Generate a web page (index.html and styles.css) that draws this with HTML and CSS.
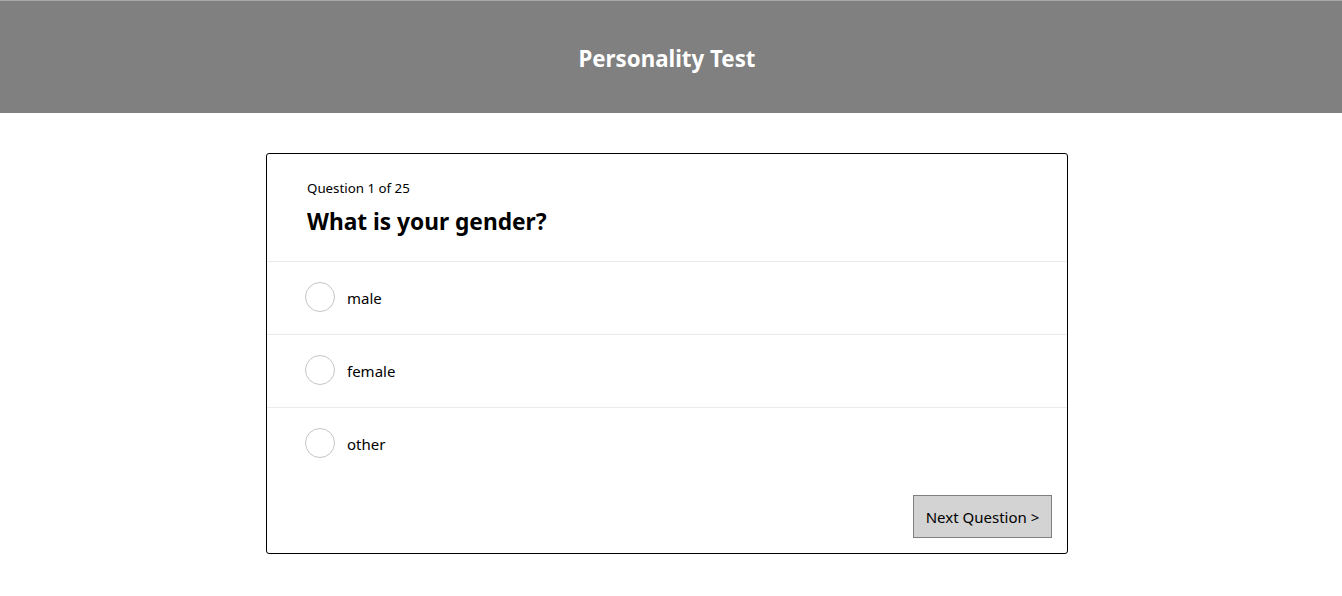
FILE: index.html
```html
<!DOCTYPE html>
<html>
<head>
<meta charset="utf-8">
<link rel="stylesheet" href="styles.css">
<title>Personality Test</title>
</head>
<body>
<header class="topbar">
  <h1 class="topbar-title">Personality Test</h1>
</header>
<main class="page">
  <section class="card">
    <div class="card-head">
      <div class="counter">Question 1 of 25</div>
      <h2 class="question">What is your gender?</h2>
    </div>
    <ul class="options">
      <li class="option"><span class="radio"></span><span class="label">male</span></li>
      <li class="option"><span class="radio"></span><span class="label">female</span></li>
      <li class="option"><span class="radio"></span><span class="label">other</span></li>
    </ul>
    <div class="actions">
      <button class="next-btn">Next Question &gt;</button>
    </div>
  </section>
</main>
</body>
</html>
```
FILE: styles.css
```css
html, body {
  margin: 0;
  padding: 0;
  background: #fff;
  font-family: "Noto Sans", "Open Sans", sans-serif;
  color: #000;
}
.topbar {
  border-top: 1px solid #a9a9a9;
  background: #808080;
  height: 112px;
  box-sizing: border-box;
  height: 113px;
  padding: 2px 8px 0 0;
  display: flex;
  align-items: center;
  justify-content: center;
}
.topbar-title {
  margin: 0;
  color: #fff;
  font-size: 22.3px;
  font-weight: 700;
}
.page {
  display: flex;
  justify-content: center;
  padding: 40px 8px 0 0;
}
.card {
  width: 800px;
  height: 399px;
  border: 1px solid #000;
  border-radius: 3px;
  display: flex;
  flex-direction: column;
}
.card-head {
  padding: 25px 40px 0 40px;
  height: 82px;
  border-bottom: 1px solid #ebebeb;
}
.counter {
  font-size: 13.3px;
  line-height: 18px;
}
.question {
  margin: 10px 0 0 0;
  font-size: 22.7px;
  font-weight: 700;
  line-height: 30px;
}
.options {
  list-style: none;
  margin: 0;
  padding: 0;
}
.option {
  display: flex;
  align-items: center;
  height: 72px;
  padding-left: 38px;
  border-bottom: 1px solid #ebebeb;
}
.option:last-child {
  border-bottom: none;
}
.radio {
  width: 28px;
  height: 28px;
  border: 1px solid #c4c4c4;
  border-radius: 50%;
  margin-right: 12px;
  margin-top: -2px;
  flex: none;
}
.label {
  font-size: 15px;
}
.actions {
  margin-top: auto;
  display: flex;
  justify-content: flex-end;
  padding: 0 15px 15px 0;
}
.next-btn {
  width: 139px;
  height: 43px;
  background: #d3d3d3;
  border: 1px solid #808080;
  font-family: inherit;
  font-size: 15px;
  color: #000;
  padding: 0;
}
```
